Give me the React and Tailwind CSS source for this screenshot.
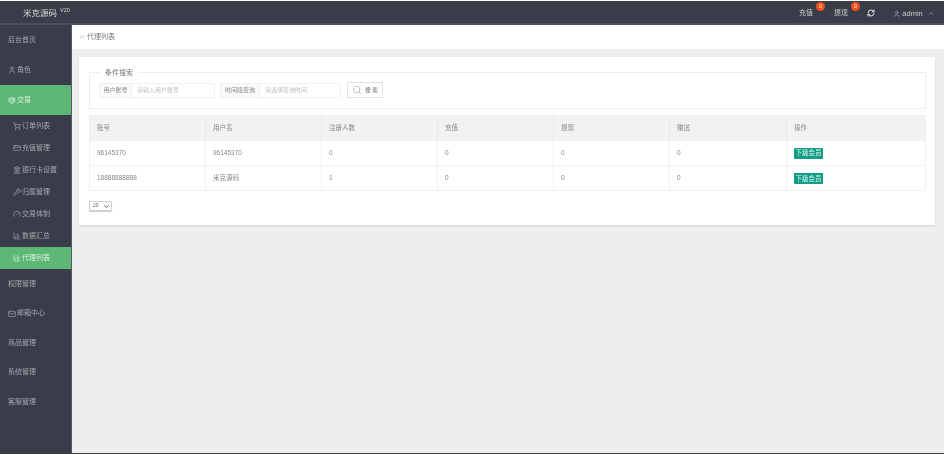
import React from "react";
import { User, ShoppingCart, Wrench, Gauge, BarChart3, RefreshCw, ChevronUp, ChevronDown, ChevronsRight, Search, Scale, CreditCard, Landmark, Mail } from "lucide-react";

const font = { cjk: "font-['Liberation_Sans','Noto_Sans_CJK_SC',sans-serif]" };

const menu = [
  { label: "后台首页", h: "h-[30px]" },
  { label: "角色", h: "h-[30px]", icon: User },
  { label: "交易", h: "h-[30px]", icon: Scale, active: true },
  { label: "订单列表", sub: true, icon: ShoppingCart },
  { label: "充值管理", sub: true, icon: CreditCard },
  { label: "银行卡设置", sub: true, icon: Landmark },
  { label: "归属管理", sub: true, icon: Wrench },
  { label: "交易体制", sub: true, icon: Gauge },
  { label: "数据汇总", sub: true, icon: BarChart3 },
  { label: "代理列表", sub: true, icon: BarChart3, active: true },
  { label: "权限管理", h: "h-[30px]" },
  { label: "邮箱中心", h: "h-[29px]", icon: Mail },
  { label: "商品管理", h: "h-[30px]" },
  { label: "系统管理", h: "h-[29px]" },
  { label: "客服管理", h: "h-[30px]" },
];

const rows = [
  ["96145370", "96145370", "0", "0", "0", "0"],
  ["18888888888", "米克源码", "1", "0", "0", "0"],
];

const headers = ["账号", "用户名", "注册人数", "充值", "提现", "赠送"];

function SideItem({ item }) {
  const Icon = item.icon;
  return (
    <div
      className={`flex items-center gap-[1px] text-[7px] ${item.sub ? "h-[22px] pl-[13px]" : `${item.h} pl-[8px]`} ${
        item.active ? "bg-[#5cb874] text-[#dff2e5]" : "text-[#a4a7af]"
      }`}
    >
      {Icon && <Icon size={8} strokeWidth={2} />}
      <span>{item.label}</span>
    </div>
  );
}

function InputGroup({ label, placeholder, labelW, inputW }) {
  return (
    <div className="flex h-[15px] border border-[#f0f0f0] text-[6px]">
      <div className={`flex items-center justify-center bg-[#fafafa] border-r border-[#f0f0f0] text-[#8a8a8a] ${labelW}`}>
        {label}
      </div>
      <div className={`flex items-center pl-[5px] text-[#c0c0c0] ${inputW}`}>{placeholder}</div>
    </div>
  );
}

function Badge() {
  return (
    <span className="absolute -top-[6px] left-[18px] w-[9px] h-[9px] rounded-full bg-[#f4511e] text-white text-[5px] leading-none flex items-center justify-center">
      0
    </span>
  );
}

export default function App() {
  return (
    <div className={`w-[944px] h-[455px] overflow-hidden bg-white pt-px pb-px antialiased blur-[0.4px] ${font.cjk}`}>
      <div className="flex h-[24px] bg-[#393d49] border-b-2 border-[#4b4f5c]">
        <div className="w-[72px] flex items-start pt-[6px] pl-[23px] text-[#d8d9dc] text-[8.5px] leading-[12px] shrink-0 whitespace-nowrap">
          米克源码
          <span className="text-[5.5px] ml-[3px] -mt-[1px] leading-[8px]">V20</span>
        </div>
        <div className="flex-1 flex justify-end items-center text-[#c9cad0] text-[7px] pt-[3px] pr-[9px]">
          <div className="relative w-[16px] flex justify-center mr-[19px]">
            充值
            <Badge />
          </div>
          <div className="relative w-[16px] flex justify-center">
            提现
            <Badge />
          </div>
          <div className="w-[44px] flex justify-center">
            <RefreshCw size={8} strokeWidth={3} className="text-[#e4e5e8] -mt-[2px]" />
          </div>
          <div className="flex items-center gap-[2px] w-[42px]">
            <User size={8} strokeWidth={1.5} />
            <span className="text-[7.5px]">admin</span>
            <ChevronUp size={9} strokeWidth={1.5} className="ml-[2px]" />
          </div>
        </div>
      </div>

      <div className="flex h-[428px]">
        <aside className="w-[72px] shrink-0 bg-[#393d49] border-r border-[#55596a]">
          {menu.map((item) => (
            <SideItem key={item.label} item={item} />
          ))}
        </aside>

        <main className="flex-1 bg-[#eeeeee]">
          <div className="h-[24px] bg-white flex items-center pl-[6px] gap-[1px] text-[7px] text-[#777]">
            <ChevronsRight size={8} strokeWidth={2} className="text-[#bbb]" />
            代理列表
          </div>

          <div className="mt-[8px] ml-[7px] mr-[9px] h-[168px] bg-white shadow-[0_1px_2px_rgba(0,0,0,0.12)] pl-[10px] pr-[9px] pt-[11px]">
            <fieldset className="h-[41px] border border-[#eeeeee] pl-[9px] pt-0">
              <legend className="ml-[1px] px-[5px] text-[7px] leading-[9px] text-[#777]">条件搜索</legend>
              <div className="flex items-center mt-[5px]">
                <InputGroup label="用户账号" placeholder="请输入用户账号" labelW="w-[32px]" inputW="w-[82px]" />
                <div className="w-[5px]" />
                <InputGroup label="时间段查询" placeholder="请选择查询时间" labelW="w-[39px]" inputW="w-[80px]" />
                <div className="flex items-center justify-center gap-[3px] ml-[6px] w-[36px] h-[16px] border border-[#e2e2e2] text-[5.5px] text-[#555]">
                  <Search size={10} strokeWidth={1} className="text-[#777]" />
                  搜 索
                </div>
              </div>
            </fieldset>

            <table className="mt-[6px] w-[837px] table-fixed border-collapse text-[6.5px] text-[#888] border border-[#f0f0f0]">
              <colgroup>
                <col className="w-[116px]" />
                <col className="w-[116px]" />
                <col className="w-[116px]" />
                <col className="w-[116px]" />
                <col className="w-[116px]" />
                <col className="w-[117px]" />
                <col />
              </colgroup>
              <thead>
                <tr className="h-[25px] bg-[#f2f2f2]">
                  {headers.map((h) => (
                    <th key={h} className="border-r border-[#e8e8e8] pl-[7px] text-left font-normal">{h}</th>
                  ))}
                  <th className="pl-[7px] text-left font-normal">操作</th>
                </tr>
              </thead>
              <tbody>
                {rows.map((row, i) => (
                  <tr key={i} className="h-[25px] border-b border-[#f2f2f2]">
                    {row.map((cell, j) => (
                      <td key={j} className="border-r border-[#f2f2f2] pl-[7px]">{cell}</td>
                    ))}
                    <td className="pl-[7px]">
                      <span className="inline-flex items-center justify-center w-[29px] h-[11px] mt-[1px] bg-[#0f9d86] text-[#e6f5f2] rounded-[1px]">下级会员</span>
                    </td>
                  </tr>
                ))}
              </tbody>
            </table>

            <div className="relative mt-[10px] w-[23px] h-[10px]">
              <select defaultValue="20" className="block appearance-none w-full h-full pl-[3px] text-[5px] text-[#666] border border-[#cfcfcf] rounded-[1px] shadow-[0_1px_1px_rgba(0,0,0,0.2)]">
                <option value="20">20</option>
              </select>
              <ChevronDown size={7} strokeWidth={3} className="absolute right-[2px] top-[2px] text-[#444] pointer-events-none" />
            </div>
          </div>
        </main>
      </div>
      <div className="h-px bg-[#393d49]" />
    </div>
  );
}
